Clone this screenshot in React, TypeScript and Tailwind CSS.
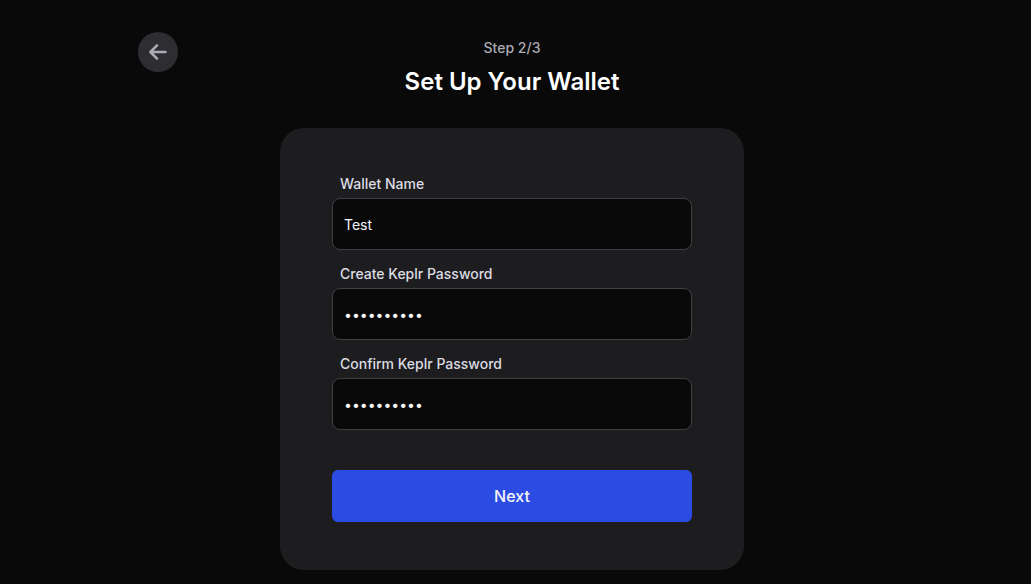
import type { ReactNode } from "react";

function Field({ id, label, type, value }: { id: string; label: string; type: string; value: string }) {
  return (
    <div>
      <label htmlFor={id} className="mb-1 ml-2 block text-sm leading-5 font-medium text-[#dcdce3]">
        {label}
      </label>
      <input
        id={id}
        type={type}
        defaultValue={value}
        className="block h-13 w-full rounded-lg border border-[#404045] bg-[#09090a] px-[11px] text-sm text-[#f6f6f9] outline-none"
      />
    </div>
  );
}

function Header({ children }: { children: ReactNode }) {
  return (
    <header className="flex h-24 w-full max-w-[748px] items-start justify-between">
      {children}
    </header>
  );
}

export default function App() {
  return (
    <main className="flex min-h-screen flex-col items-center bg-[#09090a] pt-8 pr-[7px] pb-3 font-['Inter',sans-serif]">
      <Header>
        <button type="button" aria-label="Back" className="flex size-10 items-center justify-center rounded-full bg-[#2e2e32]">
          <svg viewBox="0 0 24 24" className="size-6" fill="none" stroke="#ababb5" strokeWidth="2.5" strokeLinecap="round" strokeLinejoin="round" aria-hidden="true">
            <path d="M19.5 12H5M11 5.3L4.4 12l6.6 6.7" />
          </svg>
        </button>
        <div className="text-center">
          <p className="pt-1.5 text-sm leading-5 font-medium text-[#ababb5]">Step 2/3</p>
          <h1 className="mt-2 text-2xl leading-8 font-semibold text-white">Set Up Your Wallet</h1>
        </div>
        <div className="size-10" />
      </Header>
      <form className="w-full max-w-[464px] rounded-3xl bg-[#1d1d1f] px-13 pt-[46px] pb-12" onSubmit={(e) => e.preventDefault()}>
        <div className="flex flex-col gap-[14px]">
          <Field id="name" label="Wallet Name" type="text" value="Test" />
          <Field id="password" label="Create Keplr Password" type="password" value="abcdefghij" />
          <Field id="confirm" label="Confirm Keplr Password" type="password" value="abcdefghij" />
        </div>
        <button type="submit" className="mt-10 block h-13 w-full rounded-md bg-[#2c4be2] text-base font-medium text-[#f6f6f9]">
          Next
        </button>
      </form>
    </main>
  );
}
